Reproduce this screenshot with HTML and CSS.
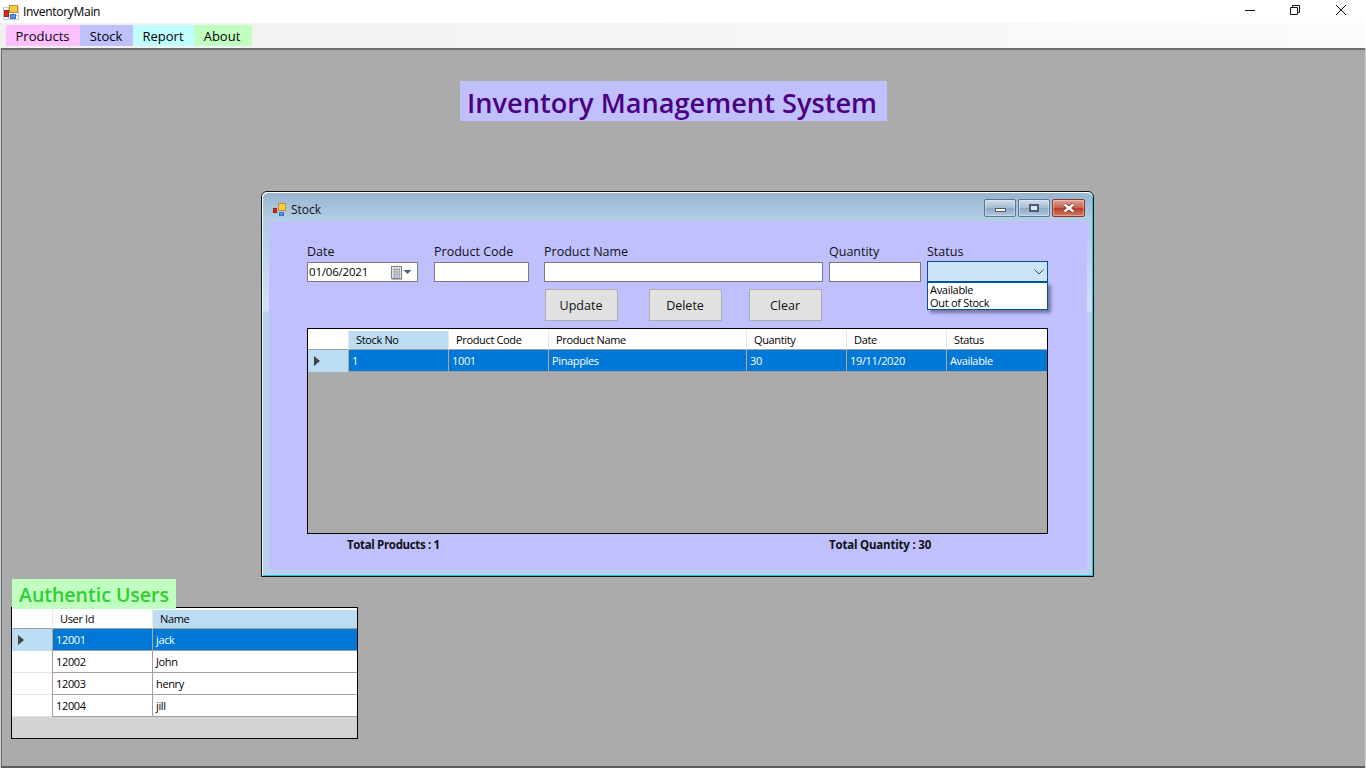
FILE: index.html
```html
<!DOCTYPE html>
<html lang="en">
<head>
    <meta charset="UTF-8">
    <meta name="viewport" content="width=device-width, initial-scale=1.0">
    <title>InventoryMain</title>
    <link rel="stylesheet" href="styles.css">
</head>
<body>
    <div class="app">
        <!-- Main window title bar -->
        <header class="titlebar">
            <svg class="app-icon" width="16" height="16" viewBox="0 0 16 16">
                <path d="M0.500 3.500h15M0.500 7.500h15M0.500 11.500h15M0.500 15.500h15M0.500 3v13M5.500 3v13M10.500 3v13M15.500 3v13" stroke="#c8c8c8" fill="none"/>
                <rect x="6.500" y="1.500" width="8" height="7" fill="#f8cc40" stroke="#b89030"/>
                <rect x="1.500" y="6.500" width="4" height="6" fill="#d82818" stroke="#a02018"/>
                <rect x="7.500" y="10.500" width="5" height="4" fill="#5a90e4" stroke="#3c70c0"/>
            </svg>
            <span class="titlebar-text">InventoryMain</span>
            <div class="caption-buttons">
                <svg width="46" height="23" viewBox="0 0 46 23"><path d="M19 10.500h10" stroke="#111" fill="none"/></svg>
                <svg width="46" height="23" viewBox="0 0 46 23"><path d="M18.500 7.500h7v7h-7zM20.500 7.500v-2h7v7h-2" stroke="#111" fill="none"/></svg>
                <svg width="46" height="23" viewBox="0 0 46 23"><path d="M18 5l10 10M28 5l-10 10" stroke="#111" fill="none"/></svg>
            </div>
        </header>

        <nav class="menubar">
            <a class="menu-item menu-products">Products</a>
            <a class="menu-item menu-stock">Stock</a>
            <a class="menu-item menu-report">Report</a>
            <a class="menu-item menu-about">About</a>
        </nav>

        <main class="desktop">
            <h1 class="app-title">Inventory Management System</h1>

            <!-- Stock child window -->
            <section class="stock-window">
                <div class="win-titlebar">
                    <svg class="app-icon" width="16" height="16" viewBox="0 0 16 16">
                        <path d="M0.500 3.500h15M0.500 7.500h15M0.500 11.500h15M0.500 3v12M5.500 3v12M10.500 3v12" stroke="#b4c4d4" fill="none"/>
                        <rect x="6.500" y="1.500" width="7" height="7" fill="#f8cc40" stroke="#b89030"/>
                        <rect x="1.500" y="6.500" width="3" height="4" fill="#d82818" stroke="#a02018"/>
                        <rect x="7.500" y="10.500" width="4" height="3" fill="#5a90e4" stroke="#3c70c0"/>
                    </svg>
                    <span class="win-title">Stock</span>
                    <div class="win-buttons">
                        <span class="win-btn"><i class="glyph-min"></i></span>
                        <span class="win-btn"><i class="glyph-max"></i></span>
                        <span class="win-btn win-close">
                            <svg width="14" height="10" viewBox="0 0 14 10">
                                <path d="M2.500 1.500l9 7M11.500 1.500l-9 7" stroke="#6a2a20" stroke-width="3.600" fill="none"/>
                                <path d="M2.500 1.500l9 7M11.500 1.500l-9 7" stroke="#fff" stroke-width="2.400" fill="none"/>
                            </svg>
                        </span>
                    </div>
                </div>

                <div class="win-body">
                    <div class="fields">
                        <div class="field field-date">
                            <label>Date</label>
                            <div class="input date-input">
                                <span>01/06/2021</span>
                                <svg width="24" height="16" viewBox="0 0 24 16">
                                    <rect x="4" y="4" width="10" height="12" fill="#b8b8b8"/>
                                    <rect x="3.500" y="2.500" width="10" height="12" fill="#dfe3e8" stroke="#7d8288"/>
                                    <path d="M5 5.500h7M5 8h7M5 10.500h7M5 13h7M6.500 4v10M9 4v10M11.500 4v10" stroke="#a4a9af" fill="none"/>
                                    <path d="M15.500 6h8l-4 4z" fill="#4d5f80"/>
                                </svg>
                            </div>
                        </div>
                        <div class="field field-code">
                            <label>Product Code</label>
                            <div class="input"></div>
                        </div>
                        <div class="field field-name">
                            <label>Product Name</label>
                            <div class="input"></div>
                        </div>
                        <div class="field field-qty">
                            <label>Quantity</label>
                            <div class="input"></div>
                        </div>
                        <div class="field field-status">
                            <label>Status</label>
                            <div class="combo">
                                <svg width="12" height="8" viewBox="0 0 12 8"><path d="M1.500 1.500l4.500 4.500 4.500-4.500" stroke="#444" fill="none"/></svg>
                            </div>
                            <ul class="combo-list">
                                <li>Available</li>
                                <li>Out of Stock</li>
                            </ul>
                        </div>
                    </div>

                    <div class="actions">
                        <button class="btn btn-update" type="button">Update</button>
                        <button class="btn btn-delete" type="button">Delete</button>
                        <button class="btn btn-clear" type="button">Clear</button>
                    </div>

                    <div class="grid grid-stock">
                        <table>
                            <colgroup>
                                <col class="col-head"><col class="col-100"><col class="col-100"><col class="col-198"><col class="col-100"><col class="col-100"><col>
                            </colgroup>
                            <thead>
                                <tr>
                                    <th class="corner"></th>
                                    <th class="sorted">Stock No</th>
                                    <th>Product Code</th>
                                    <th>Product Name</th>
                                    <th>Quantity</th>
                                    <th>Date</th>
                                    <th>Status</th>
                                </tr>
                            </thead>
                            <tbody>
                                <tr class="selected">
                                    <td class="row-head"><i class="row-arrow"></i></td>
                                    <td>1</td>
                                    <td>1001</td>
                                    <td>Pinapples</td>
                                    <td>30</td>
                                    <td>19/11/2020</td>
                                    <td>Available</td>
                                </tr>
                            </tbody>
                        </table>
                    </div>

                    <div class="totals">
                        <span class="total-products">Total Products : 1</span>
                        <span class="total-qty">Total Quantity : 30</span>
                    </div>
                </div>
            </section>

            <!-- Users panel -->
            <section class="users">
                <h2 class="users-title">Authentic Users</h2>
                <div class="grid grid-users">
                    <table>
                        <colgroup>
                            <col class="col-head"><col class="col-100"><col>
                        </colgroup>
                        <thead>
                            <tr>
                                <th class="corner"></th>
                                <th>User Id</th>
                                <th class="sorted">Name</th>
                            </tr>
                        </thead>
                        <tbody>
                            <tr class="selected">
                                <td class="row-head"><i class="row-arrow"></i></td>
                                <td>12001</td>
                                <td>jack</td>
                            </tr>
                            <tr>
                                <td class="row-head"></td>
                                <td>12002</td>
                                <td>John</td>
                            </tr>
                            <tr>
                                <td class="row-head"></td>
                                <td>12003</td>
                                <td>henry</td>
                            </tr>
                            <tr>
                                <td class="row-head"></td>
                                <td>12004</td>
                                <td>jill</td>
                            </tr>
                        </tbody>
                    </table>
                </div>
            </section>
        </main>
    </div>
</body>
</html>
```

FILE: styles.css
```css
* {
    box-sizing: border-box;
}

html, body {
    margin: 0;
    height: 100%;
    overflow: hidden;
}

body {
    font-family: "Open Sans", "Noto Sans", Arial, sans-serif;
    font-size: 12px;
    color: #000;
    background-color: #fff;
}

.app {
    display: flex;
    flex-direction: column;
    height: 768px;
    background-color: #d0d0d0;
}

/* Main window chrome */
.titlebar {
    display: flex;
    align-items: center;
    height: 23px;
    padding-left: 3px;
    background-color: #fff;
}

.titlebar-text {
    margin-left: 4px;
    font-size: 12px;
    letter-spacing: -0.3px;
}

.caption-buttons {
    display: flex;
    margin-left: auto;
    margin-right: 2px;
}

.menubar {
    display: flex;
    align-items: flex-start;
    height: 25px;
    padding: 2px 0 0 6px;
    background: linear-gradient(to right, #f0f0f0, #fbfbfb);
}

.menu-item {
    display: flex;
    align-items: center;
    justify-content: center;
    height: 21px;
    padding-right: 1px;
    font-size: 13px;
    font-weight: 500;
}

.menu-products { width: 74px; background-color: #ffc0ff; }
.menu-stock { width: 53px; background-color: #c0c0ff; }
.menu-report { width: 61px; background-color: #c0ffff; }
.menu-about { width: 58px; padding-right: 2px; background-color: #c0ffc0; }

.desktop {
    position: relative;
    flex: 1;
    margin: 0 1px 0 1px;
    background-color: #ababab;
    border-top: 2px solid #6d6d6d;
    border-left: 1px solid #6d6d6d;
    border-bottom: 2px solid #5c5c5c;
}

.app-title {
    width: 427px;
    height: 40px;
    margin: 31px 0 0 458px;
    padding-right: 3px;
    background-color: #c0c0ff;
    color: #4b0082;
    font-size: 27.200px;
    font-weight: 600;
    line-height: 44px;
    text-align: center;
    white-space: nowrap;
}

/* Stock child window */
.stock-window {
    position: absolute;
    left: 259px;
    top: 141px;
    width: 833px;
    height: 386px;
    display: flex;
    flex-direction: column;
    border: 1px solid #111;
    border-radius: 6px 6px 0 0;
    background: linear-gradient(#a8c4e0 0, #cfe3f7 118px, #b9d1ea 121px, #b9d1ea 100%);
    box-shadow: inset 1px 1px 0 rgba(255, 255, 255, 0.85), inset -1px -1px 0 #1fc0e8;
}

.win-titlebar {
    display: flex;
    align-items: center;
    height: 29px;
    padding: 6px 8px 0 10px;
    background: linear-gradient(#96b3d0, #b5cfe8);
    border-radius: 6px 6px 0 0;
    box-shadow: inset 0 1px 0 #fff, inset 1px 0 0 #fff, inset -1px 0 0 #1fc0e8;
    flex-shrink: 0;
}

.win-title {
    margin-left: 3px;
    color: #111;
}

.win-buttons {
    display: flex;
    gap: 2px;
    margin-top: -3px;
    margin-left: auto;
}

.win-btn {
    display: flex;
    align-items: center;
    justify-content: center;
    width: 32px;
    height: 18px;
    border: 1px solid #5f7690;
    border-radius: 2px;
    background: linear-gradient(#cfdcea, #a5bdd6 50%, #8ea9c6 51%, #b0c6dc);
    box-shadow: inset 0 0 0 1px rgba(255, 255, 255, 0.35);
}

.win-close {
    width: 33px;
    border-color: #8a3a2c;
    background: linear-gradient(#e0a090, #c8604c 50%, #b83c28 51%, #d07a60);
}

.glyph-min {
    width: 11px;
    height: 4px;
    margin-top: 4px;
    border: 1px solid #4c5c70;
    background-color: #fff;
}

.glyph-max {
    width: 10px;
    height: 8px;
    border: 2px solid #4c5c70;
    background-color: #dfe8f2;
}

.win-body {
    flex: 1;
    margin: 0 6px 6px 7px;
    padding: 20px 38px 0 38px;
    background-color: #c0c0ff;
}

.fields {
    display: flex;
    align-items: flex-start;
}

.field {
    position: relative;
    display: flex;
    flex-direction: column;
    flex-shrink: 0;
}

.field label {
    height: 21px;
    font-size: 12.500px;
    line-height: 21px;
    color: #111;
    white-space: nowrap;
}

.field-date { width: 111px; }
.field-code { width: 95px; margin-left: 16px; }
.field-name { width: 279px; margin-left: 15px; }
.field-qty { width: 92px; margin-left: 6px; }
.field-status { width: 121px; margin-left: 6px; }

.input {
    height: 20px;
    background-color: #fff;
    border: 1px solid #7a7a7a;
}

.date-input {
    display: flex;
    align-items: center;
    justify-content: space-between;
    padding: 0 5px 1px 1px;
    font-size: 11.500px;
    letter-spacing: -0.2px;
}

.combo {
    display: flex;
    align-items: center;
    justify-content: flex-end;
    height: 21px;
    padding-right: 2px;
    margin-top: -1px;
    background-color: #cce4f7;
    border: 1px solid #005499;
}

.combo-list {
    position: absolute;
    top: 41px;
    left: 0;
    width: 121px;
    height: 28px;
    margin: 0;
    padding: 0 2px;
    list-style: none;
    background-color: #fff;
    border: 1px solid #005499;
    box-shadow: 3px 3px 3px rgba(60, 60, 90, 0.55);
    font-size: 11px;
    letter-spacing: -0.3px;
    line-height: 13px;
}

.actions {
    display: flex;
    margin-top: 7px;
    padding-left: 238px;
}

.btn {
    height: 32px;
    padding: 0 1px 0 0;
    background-color: #e1e1e1;
    border: 1px solid #adadad;
    font-family: inherit;
    font-size: 12.500px;
    color: #111;
}

.btn-update { width: 73px; }
.btn-delete { width: 73px; margin-left: 31px; }
.btn-clear { width: 73px; margin-left: 27px; }

/* Data grids */
.grid {
    background-color: #ababab;
    border: 1px solid #000;
    overflow: hidden;
}

.grid table {
    table-layout: fixed;
    width: 100%;
    border-spacing: 0;
    font-size: 11px;
    letter-spacing: -0.35px;
}

.grid th,
.grid td {
    height: 22px;
    padding: 0 0 0 3px;
    overflow: hidden;
    white-space: nowrap;
    text-align: left;
    font-weight: 400;
}

.grid th {
    height: 21px;
    padding-left: 7px;
    background-color: #fff;
    border-left: 1px solid #e8e8e8;
    border-bottom: 1px solid #a0a0a0;
}

.grid td {
    background-color: #fff;
    border-left: 1px solid #a0a0a0;
    border-bottom: 1px solid #a0a0a0;
}

.grid th.corner {
    border-left: 0;
}

.grid th.sorted {
    background-color: #bcdcf4;
    box-shadow: inset 0 2px 0 #fff;
}

.grid .row-head {
    padding: 0;
    border-left: 0;
    border-bottom: 1px solid #e4e4e4;
}

.grid .selected td {
    background-color: #0078d7;
    color: #fff;
    border-left-color: #b8a58a;
    border-bottom-color: #a0a0a0;
}

.grid .selected .row-head {
    background-color: #bcdcf4;
    border-bottom: 0;
}

.row-arrow {
    display: block;
    width: 0;
    height: 0;
    margin-left: 6px;
    border-left: 6px solid #444;
    border-top: 5px solid transparent;
    border-bottom: 5px solid transparent;
}

.col-head { width: 40px; }
.col-100 { width: 100px; }
.col-198 { width: 198px; }

.grid-stock {
    width: 741px;
    height: 206px;
    margin-top: 7px;
}

.totals {
    display: flex;
    margin-top: 3px;
    padding-left: 40px;
    font-size: 11.500px;
    font-weight: 700;
    letter-spacing: -0.2px;
    color: #111;
}

.total-products {
    width: 482px;
    letter-spacing: -0.35px;
}

/* Users panel */
.users {
    position: absolute;
    left: 9px;
    top: 529px;
    width: 347px;
}

.users-title {
    position: relative;
    z-index: 1;
    width: 164px;
    height: 30px;
    margin: 0 0 -2px 1px;
    background-color: #c0ffc0;
    color: #32cd32;
    font-size: 19.500px;
    font-weight: 600;
    line-height: 32px;
    text-align: center;
    white-space: nowrap;
}

.grid-users {
    height: 132px;
    background-color: #d3d3d3;
}
```
